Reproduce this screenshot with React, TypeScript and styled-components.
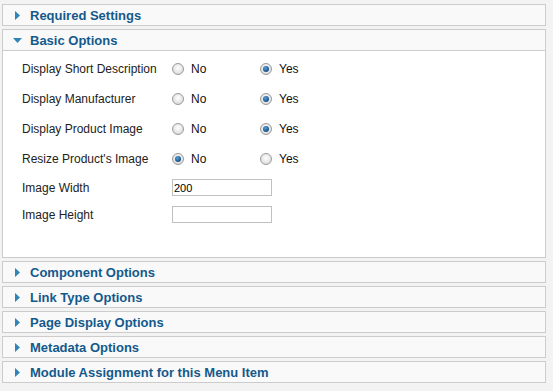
import React from 'react'
import styled, { createGlobalStyle } from 'styled-components'

const GlobalStyle = createGlobalStyle`
  html, body {
    margin: 0;
    padding: 0;
    background: #f3f3f3;
    font-family: "Liberation Sans", Arial, sans-serif;
  }
`

const Page = styled.div`
  width: 553px;
  height: 391px;
  padding: 4px 0 0 2px;
  box-sizing: border-box;
  display: flex;
  flex-direction: column;
  gap: 3px;
`

const Panel = styled.div`
  width: 544px;
  box-sizing: border-box;
  border: 1px solid #cccccc;
  background: #fafafa;
`

const Toggler = styled.div<{ $open?: boolean }>`
  height: 20px;
  display: flex;
  align-items: center;
  gap: 8px;
  padding-left: 10px;
  background: #f9f9f9;
  border-bottom: ${({ $open }) => ($open ? '1px solid #cccccc' : 'none')};
  font-size: 13px;
  font-weight: bold;
  color: #14598c;
  cursor: pointer;
`

const Arrow = styled.svg`
  width: 9px;
  height: 9px;
  flex: none;
`

const Content = styled.div`
  background: #ffffff;
  padding: 3px 0 29px 19px;
  display: flex;
  flex-direction: column;
`

const Row = styled.div<{ $short?: boolean }>`
  display: grid;
  grid-template-columns: 150px 88px 1fr;
  height: ${({ $short }) => ($short ? '27px' : '30px')};
  align-items: center;
`

const Label = styled.div`
  font-size: 12px;
  color: #222222;
`

const Option = styled.label`
  display: flex;
  align-items: center;
  gap: 7px;
  font-size: 12px;
  color: #111111;
`

const Radio = styled.span<{ $checked?: boolean }>`
  width: 12px;
  height: 12px;
  box-sizing: border-box;
  border-radius: 50%;
  border: 1px solid #9a9a9a;
  background: radial-gradient(circle at 50% 40%, #ffffff 0%, #e4e4e4 60%, #cfcfcf 100%);
  display: flex;
  align-items: center;
  justify-content: center;
  &::after {
    content: '';
    display: ${({ $checked }) => ($checked ? 'block' : 'none')};
    width: 6px;
    height: 6px;
    border-radius: 50%;
    background: radial-gradient(circle at 40% 35%, #5aa0d8 0%, #1d5a92 60%, #143f6a 100%);
  }
`

const TextInput = styled.input`
  grid-column: 2 / 4;
  width: 100px;
  height: 17px;
  box-sizing: border-box;
  border: 1px solid #c0c0c0;
  padding: 0 1px;
  font-family: "Liberation Sans", Arial, sans-serif;
  font-size: 11px;
  color: #000;
  outline: none;
`

const ArrowRight = () => (
  <Arrow viewBox="0 0 9 9">
    <path d="M2 0 L7 4.5 L2 9 Z" fill="#2f84b8" />
  </Arrow>
)

const ArrowDown = () => (
  <Arrow viewBox="0 0 9 9">
    <path d="M0 2 L9 2 L4.5 7 Z" fill="#2f84b8" />
  </Arrow>
)

const radios = [
  { label: 'Display Short Description', yes: true },
  { label: 'Display Manufacturer', yes: true },
  { label: 'Display Product Image', yes: true },
  { label: "Resize Product's Image", yes: false },
]

const closedPanels = [
  'Component Options',
  'Link Type Options',
  'Page Display Options',
  'Metadata Options',
  'Module Assignment for this Menu Item',
]

export default function App() {
  return (
    <>
      <GlobalStyle />
      <Page>
        <Panel>
          <Toggler>
            <ArrowRight />
            Required Settings
          </Toggler>
        </Panel>
        <Panel>
          <Toggler $open>
            <ArrowDown />
            Basic Options
          </Toggler>
          <Content>
            {radios.map((r) => (
              <Row key={r.label}>
                <Label>{r.label}</Label>
                <Option>
                  <Radio $checked={!r.yes} />
                  No
                </Option>
                <Option>
                  <Radio $checked={r.yes} />
                  Yes
                </Option>
              </Row>
            ))}
            <Row $short>
              <Label>Image Width</Label>
              <TextInput defaultValue="200" />
            </Row>
            <Row $short>
              <Label>Image Height</Label>
              <TextInput defaultValue="" />
            </Row>
          </Content>
        </Panel>
        {closedPanels.map((title) => (
          <Panel key={title}>
            <Toggler>
              <ArrowRight />
              {title}
            </Toggler>
          </Panel>
        ))}
      </Page>
    </>
  )
}
